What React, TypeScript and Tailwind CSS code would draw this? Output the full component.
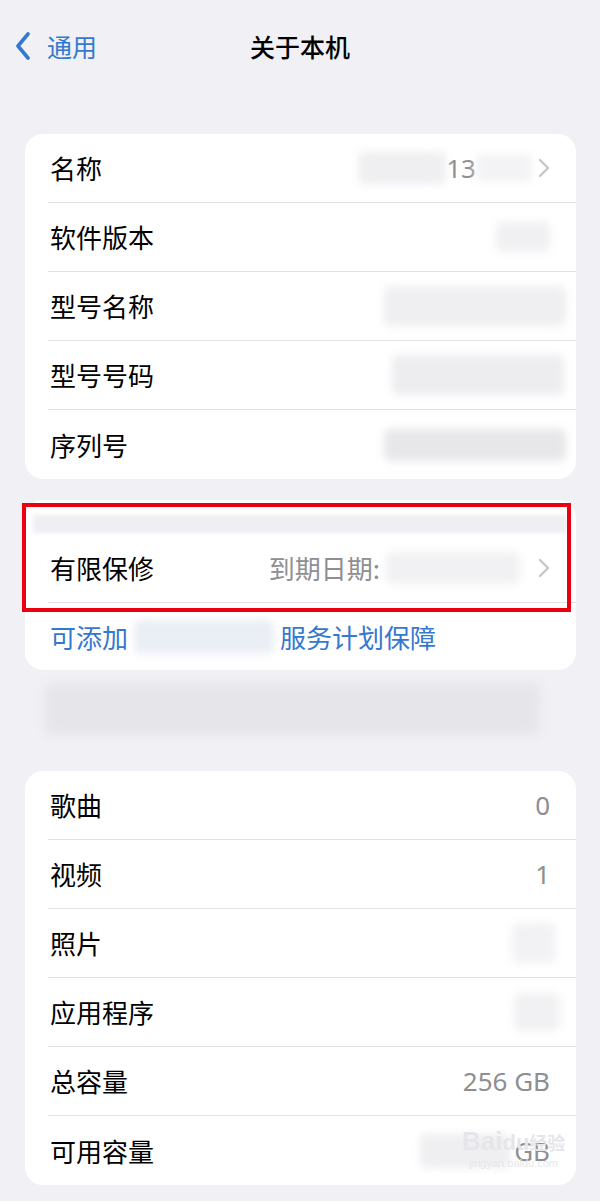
import React from "react";

const FONT = {
  fontFamily: '"Noto Sans CJK SC", "Noto Sans", sans-serif',
};

function Chevron() {
  return (
    <svg width="12" height="20" viewBox="0 0 12 20" className="shrink-0">
      <path d="M2 2 L10 10 L2 18" fill="none" stroke="#c4c4c8" strokeWidth="2.2" strokeLinecap="round" strokeLinejoin="round" />
    </svg>
  );
}

function Blur({ w, h = 34, tone = "bg-[#ededf0]" }: { w: number; h?: number; tone?: string }) {
  return <div className={`${tone} rounded-md blur-[4px]`} style={{ width: w, height: h }} />;
}

function Row({
  label,
  children,
  last,
}: {
  label: string;
  children?: React.ReactNode;
  last?: boolean;
}) {
  return (
    <div className="pl-[23px]">
      <div
        className={`flex items-center justify-between h-[69px] pl-[2px] pr-[26px] ${
          last ? "" : "border-b border-[#e2e2e6]"
        }`}
      >
        <span className="text-[26px] text-black leading-none">{label}</span>
        <div className="flex items-center">{children}</div>
      </div>
    </div>
  );
}

function Val({ children }: { children: React.ReactNode }) {
  return (
    <span
      className="text-[26px] text-[#8e8e93] leading-none"
      style={{ fontFamily: '"Noto Sans", "Noto Sans CJK SC", sans-serif' }}
    >
      {children}
    </span>
  );
}

export default function App() {
  return (
    <div className="relative w-[600px] h-[1201px] overflow-hidden bg-[#f0f0f5]" style={FONT}>
      {/* Nav */}
      <div className="relative flex items-center h-[92px]">
        <div className="flex items-center pl-[15px] gap-[16px] text-[#3478d0]">
          <svg width="16" height="28" viewBox="0 0 16 28">
            <path d="M13 2 L3 14 L13 26" fill="none" stroke="#3478d0" strokeWidth="3.6" strokeLinecap="round" strokeLinejoin="round" />
          </svg>
          <span className="text-[25px] leading-none">通用</span>
        </div>
        <div className="absolute inset-x-0 text-center text-[25px] font-medium text-black leading-none pointer-events-none">
          关于本机
        </div>
      </div>

      <div className="pr-[24px] pl-[25px] pt-[42px]">
        {/* Card 1 */}
        <div className="bg-white rounded-[18px] overflow-hidden">
          <Row label="名称">
            <Blur w={88} h={32} tone="bg-[#efeff1]" />
            <Val>13</Val>
            <div className="w-[56px] mr-[6px] h-[26px] bg-[#f3f3f5] blur-[4px]" />
            <Chevron />
          </Row>
          <Row label="软件版本">
            <Blur w={54} h={30} tone="bg-[#f0f0f2]" />
          </Row>
          <Row label="型号名称">
            <div className="mr-[-16px]">
              <Blur w={182} h={40} tone="bg-[#efeff1]" />
            </div>
          </Row>
          <Row label="型号号码">
            <div className="mr-[-14px]">
              <Blur w={172} h={40} tone="bg-[#ededf0]" />
            </div>
          </Row>
          <Row label="序列号" last>
            <div className="mr-[-16px]">
              <Blur w={182} h={32} tone="bg-[#e7e7ea]" />
            </div>
          </Row>
        </div>

        {/* Card 2 */}
        <div className="relative mt-[21px] bg-white rounded-[18px]">
          <div className="pt-[15px] px-[8px]">
            <div className="h-[18px] bg-[#efeff3] blur-[2px]" />
          </div>
          <div className="pl-[23px]">
            <div className="flex items-center justify-between h-[70px] pl-[2px] pr-[26px] border-b border-[#e2e2e6]">
              <span className="text-[26px] text-black leading-none">有限保修</span>
              <div className="flex items-center">
                <span className="text-[26px] text-[#8e8e93] leading-none">到期日期:</span>
                <div className="ml-[6px] mr-[18px]">
                  <Blur w={134} h={32} tone="bg-[#f1f1f3]" />
                </div>
                <Chevron />
              </div>
            </div>
          </div>
          <div className="flex items-center h-[67px] pl-[25px] text-[26px] leading-none text-[#3478d0]">
            <span>可添加</span>
            <div className="mx-[6px]">
              <Blur w={140} h={34} tone="bg-[#eaeef5]" />
            </div>
            <span>服务计划保障</span>
          </div>

          {/* red annotation box */}
          <div className="absolute left-[-3px] top-[3px] w-[549px] h-[109px] border-[4px] border-[#ea0010] pointer-events-none" />
        </div>

        {/* blurred footer */}
        <div className="mt-[13px] ml-[20px] w-[495px] h-[52px] bg-[#e6e6ea] rounded-lg blur-[5px]" />

        {/* Card 3 */}
        <div className="mt-[36px] bg-white rounded-[18px] overflow-hidden">
          <Row label="歌曲">
            <Val>0</Val>
          </Row>
          <Row label="视频">
            <Val>1</Val>
          </Row>
          <Row label="照片">
            <div className="mr-[-6px]">
              <Blur w={44} h={40} tone="bg-[#f2f2f4]" />
            </div>
          </Row>
          <Row label="应用程序">
            <div className="mr-[-10px]">
              <Blur w={46} h={38} tone="bg-[#f1f1f3]" />
            </div>
          </Row>
          <Row label="总容量">
            <Val>256 GB</Val>
          </Row>
          <Row label="可用容量" last>
            <div className="mr-[4px]">
              <Blur w={90} h={34} tone="bg-[#efeff1]" />
            </div>
            <Val>GB</Val>
          </Row>
        </div>
      </div>

      {/* watermark */}
      <div className="absolute left-[462px] top-[1128px] flex flex-col items-center leading-none text-[#e6e6ea] pointer-events-none">
        <span className="text-[26px] font-bold" style={{ fontFamily: '"Liberation Sans", sans-serif' }}>
          Bai<span className="text-[22px]">du</span>
          <span className="text-[18px]" style={FONT}>经验</span>
        </span>
        <span className="text-[11px] mt-[4px]" style={{ fontFamily: '"Liberation Sans", sans-serif' }}>
          jingyan.baidu.com
        </span>
      </div>
    </div>
  );
}
